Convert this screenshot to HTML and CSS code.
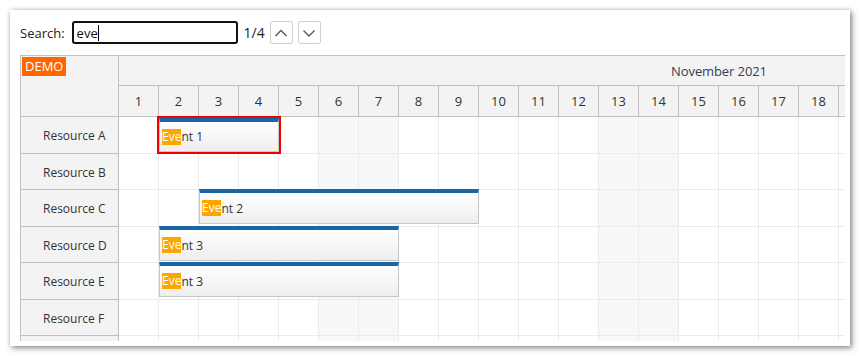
FILE: index.html
```html
<!DOCTYPE html>
<html lang="en">
<head>
    <meta charset="UTF-8">
    <title>Scheduler Search</title>
    <link rel="stylesheet" href="styles.css">
</head>
<body>
    <div class="panel">
        <!-- Search toolbar -->
        <div class="toolbar">
            <span class="search-label">Search:</span>
            <div class="search-input"><span>eve</span><span class="caret"></span></div>
            <span class="search-count">1/4</span>
            <button class="nav-btn">
                <svg width="14" height="14" viewBox="0 0 14 14"><polyline points="1.5,10 7,4.5 12.5,10" /></svg>
            </button>
            <button class="nav-btn">
                <svg width="14" height="14" viewBox="0 0 14 14"><polyline points="1.5,4.5 7,10 12.5,4.5" /></svg>
            </button>
        </div>

        <!-- Scheduler -->
        <div class="scheduler">
            <div class="corner"><span class="demo">DEMO</span></div>

            <div class="timeline-header">
                <div class="month-row">November 2021</div>
                <div class="day-row">
                    <div class="day">1</div><div class="day">2</div><div class="day">3</div><div class="day">4</div>
                    <div class="day">5</div><div class="day">6</div><div class="day">7</div><div class="day">8</div>
                    <div class="day">9</div><div class="day">10</div><div class="day">11</div><div class="day">12</div>
                    <div class="day">13</div><div class="day">14</div><div class="day">15</div><div class="day">16</div>
                    <div class="day">17</div><div class="day">18</div><div class="day"></div>
                </div>
            </div>

            <div class="row-headers">
                <div class="resource">Resource A</div>
                <div class="resource">Resource B</div>
                <div class="resource">Resource C</div>
                <div class="resource">Resource D</div>
                <div class="resource">Resource E</div>
                <div class="resource">Resource F</div>
                <div class="resource"></div>
            </div>

            <div class="grid">
                <div class="lane">
                    <div class="event selected" style="left: 40px; width: 120px;"><span class="hit">Eve</span>nt 1</div>
                </div>
                <div class="lane"></div>
                <div class="lane">
                    <div class="event" style="left: 80px; width: 280px;"><span class="hit">Eve</span>nt 2</div>
                </div>
                <div class="lane">
                    <div class="event" style="left: 40px; width: 240px;"><span class="hit">Eve</span>nt 3</div>
                </div>
                <div class="lane">
                    <div class="event" style="left: 40px; width: 240px;"><span class="hit">Eve</span>nt 3</div>
                </div>
                <div class="lane"></div>
                <div class="lane"></div>
            </div>
        </div>
    </div>
</body>
</html>
```

FILE: styles.css
```css
body {
    margin: 0;
    padding: 10px;
    background-color: #fff;
    font-family: 'Open Sans', 'Noto Sans', sans-serif;
    color: #333;
}
.panel {
    width: 840px;
    height: 336px;
    box-sizing: border-box;
    padding: 11px 5px 5px 10px;
    background-color: #fff;
    box-shadow: 2px 2px 6px rgba(0, 0, 0, 0.45), 0 0 4px rgba(0, 0, 0, 0.15);
}

/* Toolbar */
.toolbar {
    display: flex;
    align-items: center;
    height: 23px;
    margin-bottom: 11px;
    font-size: 13px;
}
.search-label {
    margin-right: 7px;
    color: #222;
}
.search-input {
    display: flex;
    align-items: center;
    width: 166px;
    height: 23px;
    box-sizing: border-box;
    border: 2px solid #111;
    border-radius: 3px;
    padding-left: 3px;
    font-size: 13px;
    color: #111;
}
.caret {
    width: 1px;
    height: 16px;
    background-color: #000;
}
.search-count {
    margin: 0 3px 0 6px;
    font-size: 14px;
    color: #222;
}
.nav-btn {
    width: 23px;
    height: 23px;
    margin-left: 2px;
    margin-right: 3px;
    padding: 0;
    border: 1px solid #cfcfcf;
    border-radius: 2px;
    background-color: #fff;
    display: flex;
    align-items: center;
    justify-content: center;
}
.nav-btn svg polyline {
    fill: none;
    stroke: #555;
    stroke-width: 1.3;
}

/* Scheduler */
.scheduler {
    display: grid;
    grid-template-columns: 98px 1200px;
    grid-template-rows: 61px auto;
    width: 825px;
    height: 286px;
    box-sizing: border-box;
    border-top: 1px solid #c0c0c0;
    border-left: 1px solid #c0c0c0;
    overflow: hidden;
    font-size: 12px;
}
.corner {
    background-color: #f3f3f3;
    border-right: 1px solid #c0c0c0;
    border-bottom: 1px solid #c0c0c0;
    padding: 1px 0 0 1px;
}
.demo {
    display: inline-block;
    background-color: #ff6600;
    color: #fff;
    font-size: 13px;
    line-height: 19px;
    padding: 0 3px;
}
.timeline-header {
    background-color: #f3f3f3;
    border-bottom: 1px solid #c0c0c0;
}
.month-row {
    height: 29px;
    line-height: 31px;
    border-bottom: 1px solid #c0c0c0;
    text-align: center;
    font-size: 13px;
    letter-spacing: -0.1px;
    color: #34404f;
}
.day-row {
    display: flex;
    height: 30px;
}
.day {
    flex: 0 0 40px;
    box-sizing: border-box;
    border-right: 1px solid #c0c0c0;
    text-align: center;
    line-height: 31px;
    font-size: 13px;
}
.row-headers {
    background-color: #f3f3f3;
    border-right: 1px solid #c0c0c0;
}
.resource {
    height: 36px;
    line-height: 38px;
    padding-left: 22px;
    border-bottom: 1px solid #c0c0c0;
}
.resource:nth-child(odd), .lane:nth-child(odd) {
    height: 36px;
}
.resource:nth-child(even), .lane:nth-child(even) {
    height: 35px;
}
.grid {
    background:
        repeating-linear-gradient(90deg, transparent 0 39px, #ebebeb 39px 40px),
        repeating-linear-gradient(90deg, #fff 0 200px, #f8f8f8 200px 280px);
}
.lane {
    position: relative;
    border-bottom: 1px solid #ebebeb;
}

/* Events */
.event {
    position: absolute;
    top: -1px;
    height: 35px;
    box-sizing: border-box;
    border: 1px solid #c6c6c6;
    border-top: 4px solid #1766a6;
    background: linear-gradient(#ffffff, #eeeeee);
    padding-left: 2px;
    display: flex;
    align-items: center;
    font-size: 12px;
    color: #333;
}
.event.selected {
    top: 1px;
    height: 34px;
    outline: 2px solid #f00000;
}
.hit {
    background-color: #ffa500;
    color: #fff;
    line-height: 16px;
}
```
